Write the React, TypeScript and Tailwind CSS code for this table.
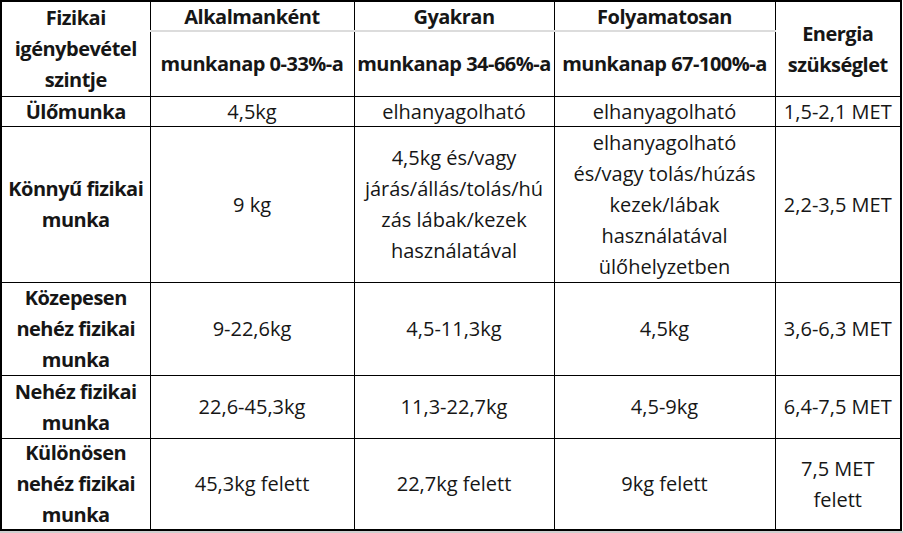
const rows = [
  {
    label: ['Ülőmunka'],
    cells: [['4,5kg'], ['elhanyagolható'], ['elhanyagolható'], ['1,5-2,1 MET']],
    h: 'h-[30px]',
  },
  {
    label: ['Könnyű fizikai', 'munka'],
    cells: [
      ['9 kg'],
      ['4,5kg és/vagy', 'járás/állás/tolás/hú', 'zás lábak/kezek', 'használatával'],
      ['elhanyagolható', 'és/vagy tolás/húzás', 'kezek/lábak', 'használatával', 'ülőhelyzetben'],
      ['2,2-3,5 MET'],
    ],
    h: 'h-[156px]',
  },
  {
    label: ['Közepesen', 'nehéz fizikai', 'munka'],
    cells: [['9-22,6kg'], ['4,5-11,3kg'], ['4,5kg'], ['3,6-6,3 MET']],
    h: 'h-[93px]',
  },
  {
    label: ['Nehéz fizikai', 'munka'],
    cells: [['22,6-45,3kg'], ['11,3-22,7kg'], ['4,5-9kg'], ['6,4-7,5 MET']],
    h: 'h-[63px]',
  },
  {
    label: ['Különösen', 'nehéz fizikai', 'munka'],
    cells: [['45,3kg felett'], ['22,7kg felett'], ['9kg felett'], ['7,5 MET', 'felett']],
    h: 'h-[92px]',
  },
];

// cell text: keep 31px line spacing but let lines touch the borders like the source
const Lines = ({ lines }: { lines: string[] }) => (
  <div className="-my-[3px]">
    {lines.map((l, i) => (
      <div key={i} className="whitespace-nowrap">
        {l}
      </div>
    ))}
  </div>
);

export default function App() {
  return (
    <div
      className="w-[903px] h-[533px] bg-white text-[#161616] overflow-hidden"
      style={{ fontFamily: '"Open Sans", "Liberation Sans", sans-serif' }}
    >
      <table className="w-[902px] table-fixed border-collapse border-2 border-black text-[20px] leading-[31px] text-center">
        <colgroup>
          <col className="w-[149px]" />
          <col className="w-[204px]" />
          <col className="w-[200px]" />
          <col className="w-[221px]" />
          <col className="w-[126px]" />
        </colgroup>
        <thead className="font-bold tracking-[-0.5px]">
          <tr className="h-[30px]">
            <th rowSpan={2} className="border border-black p-0 align-middle">
              <Lines lines={['Fizikai', 'igénybevétel', 'szintje']} />
            </th>
            <th className="border-x border-black border-b-2 border-b-[#dcdcdc] p-0">
              <Lines lines={['Alkalmanként']} />
            </th>
            <th className="border-x border-black border-b-2 border-b-[#dcdcdc] p-0">
              <Lines lines={['Gyakran']} />
            </th>
            <th className="border-x border-black border-b-2 border-b-[#dcdcdc] p-0">
              <Lines lines={['Folyamatosan']} />
            </th>
            <th rowSpan={2} className="border border-black p-0 align-middle">
              <Lines lines={['Energia', 'szükséglet']} />
            </th>
          </tr>
          <tr className="h-[65px]">
            <th className="border-x border-b border-black p-0">munkanap 0-33%-a</th>
            <th className="border-x border-b border-black p-0">munkanap 34-66%-a</th>
            <th className="border-x border-b border-black p-0">munkanap 67-100%-a</th>
          </tr>
        </thead>
        <tbody>
          {rows.map((r, i) => (
            <tr key={i} className={r.h}>
              <td className="border border-black p-0 align-middle font-bold tracking-[-0.5px]">
                <Lines lines={r.label} />
              </td>
              {r.cells.map((c, j) => (
                <td key={j} className="border border-black p-0 align-middle">
                  <Lines lines={c} />
                </td>
              ))}
            </tr>
          ))}
        </tbody>
      </table>
      <div className="h-[2px] w-[903px] bg-[#cfcfcf]" />
    </div>
  );
}
